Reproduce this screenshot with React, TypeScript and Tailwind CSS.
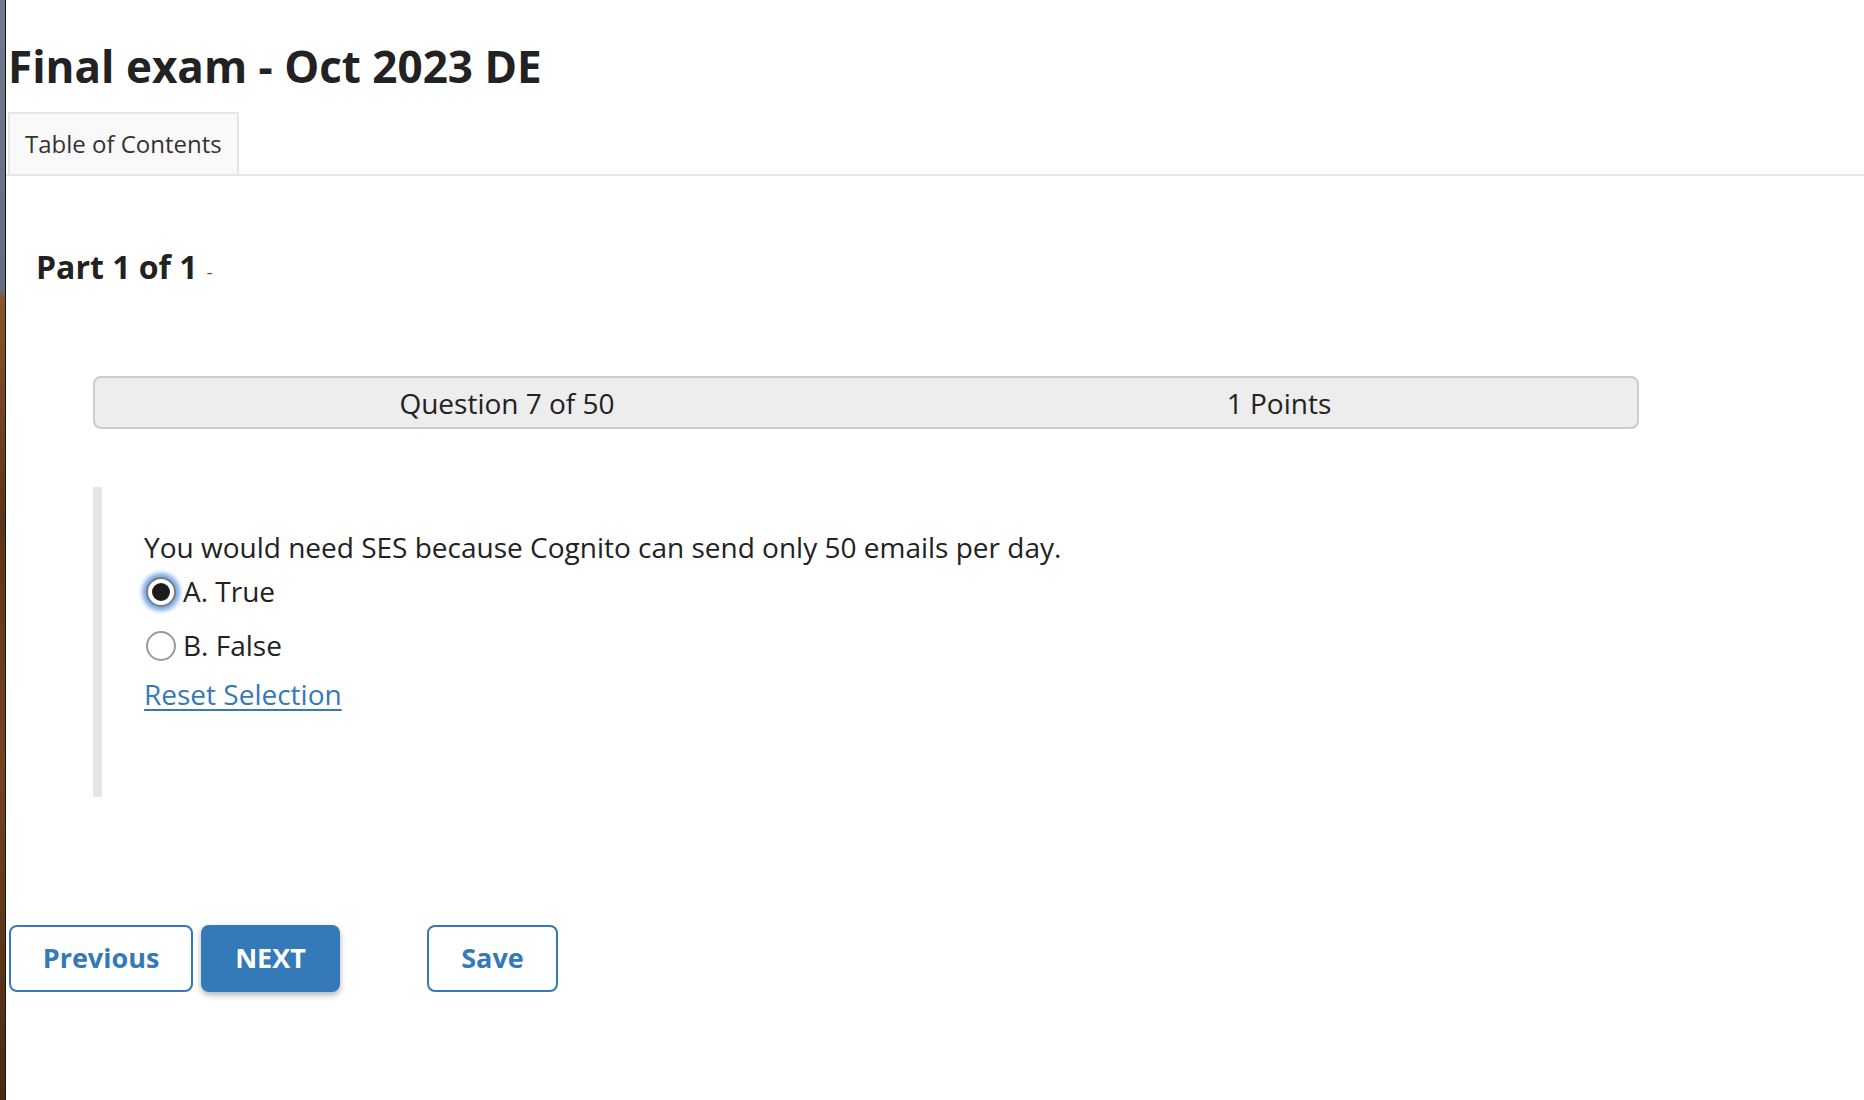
import { useState } from "react";

const options = [
  { key: "A", label: "A. True" },
  { key: "B", label: "B. False" },
];

export default function App() {
  const [selected, setSelected] = useState<string | null>("A");

  return (
    <div
      className="flex min-h-screen bg-white text-[#222]"
      style={{ fontFamily: '"Open Sans", "Noto Sans", sans-serif' }}
    >
      {/* desktop peeking out at the window edge */}
      <div className="w-[5px] shrink-0 bg-[linear-gradient(to_bottom,#6f7a8b_0px,#636e80_290px,#8a5529_298px,#5c3419_520px,#74441f_760px,#4a2a14_1100px)]" />
      <div className="w-px shrink-0 bg-[#161616]" />

      <main className="min-w-0 flex-1">
        <h1 className="mt-[36px] pl-[2px] text-[44px] font-bold leading-[60px] text-[#222]">
          Final exam - Oct 2023 DE
        </h1>

        <div className="mt-[16px] flex border-b-2 border-[#e6e6e6] pl-[2px]">
          <button className="border-2 border-b-0 border-[#e6e6e6] bg-[#f9f9f9] px-[15px] py-[14px] text-[24px] leading-[32px] text-[#333]">
            Table of Contents
          </button>
        </div>

        <h2 className="mt-[69px] pl-[30px] text-[32px] font-bold leading-[44px] text-[#222]">
          Part 1 of 1
          <span className="ml-[9px] text-[19px] font-normal leading-none text-[#555]">-</span>
        </h2>

        <div className="ml-[87px] mt-[87px] flex h-[53px] w-[1546px] items-center rounded-[8px] border-2 border-[#cccccc] bg-[#ededed]">
          <div className="grid grid-cols-[772px_772px] pl-[26px] text-[28px] leading-[40px] text-[#222]">
            <span className="text-center">Question 7 of 50</span>
            <span className="text-center">1 Points</span>
          </div>
        </div>

        <section className="ml-[87px] mt-[58px] h-[310px] border-l-[9px] border-[#e6e6e6] pl-[42px] pt-[40px] text-[28px] leading-[40px]">
          <p>You would need SES because Cognito can send only 50 emails per day.</p>

          <div className="mt-[4px] flex flex-col">
            {options.map((opt, i) => {
              const on = selected === opt.key;
              return (
                <label
                  key={opt.key}
                  className={`flex cursor-pointer items-start pl-[2px] ${i > 0 ? "mt-[14px]" : ""}`}
                  onClick={() => setSelected(opt.key)}
                >
                  <span
                    className={`mt-[6px] flex h-[30px] w-[30px] shrink-0 items-center justify-center rounded-full border-2 bg-white ${
                      on
                        ? "border-[#7d7d7d] shadow-[0_0_4px_4px_rgba(66,133,222,0.7)]"
                        : "border-[#9a9a9a]"
                    }`}
                  >
                    {on && <span className="h-[18px] w-[18px] rounded-full bg-[#1c1c1c]" />}
                  </span>
                  <span className="ml-[7px]">{opt.label}</span>
                </label>
              );
            })}
          </div>

          <a
            href="#"
            onClick={(e) => {
              e.preventDefault();
              setSelected(null);
            }}
            className="mt-[9px] inline-block text-[#3479b8] underline underline-offset-[4px]"
          >
            Reset Selection
          </a>
        </section>

        <div className="ml-[3px] mt-[128px] flex pb-[40px]">
          <button className="h-[67px] w-[184px] rounded-[8px] border-2 border-[#3479b8] bg-white text-[27px] font-bold text-[#3479b8]">
            Previous
          </button>
          <button className="ml-[8px] h-[67px] w-[139px] rounded-[8px] bg-[#3479b8] text-[27px] font-bold text-white shadow-[0_3px_6px_rgba(0,0,0,0.3)]">
            NEXT
          </button>
          <button className="ml-[87px] h-[67px] w-[131px] rounded-[8px] border-2 border-[#3479b8] bg-white text-[27px] font-bold text-[#3479b8]">
            Save
          </button>
        </div>
      </main>
    </div>
  );
}
